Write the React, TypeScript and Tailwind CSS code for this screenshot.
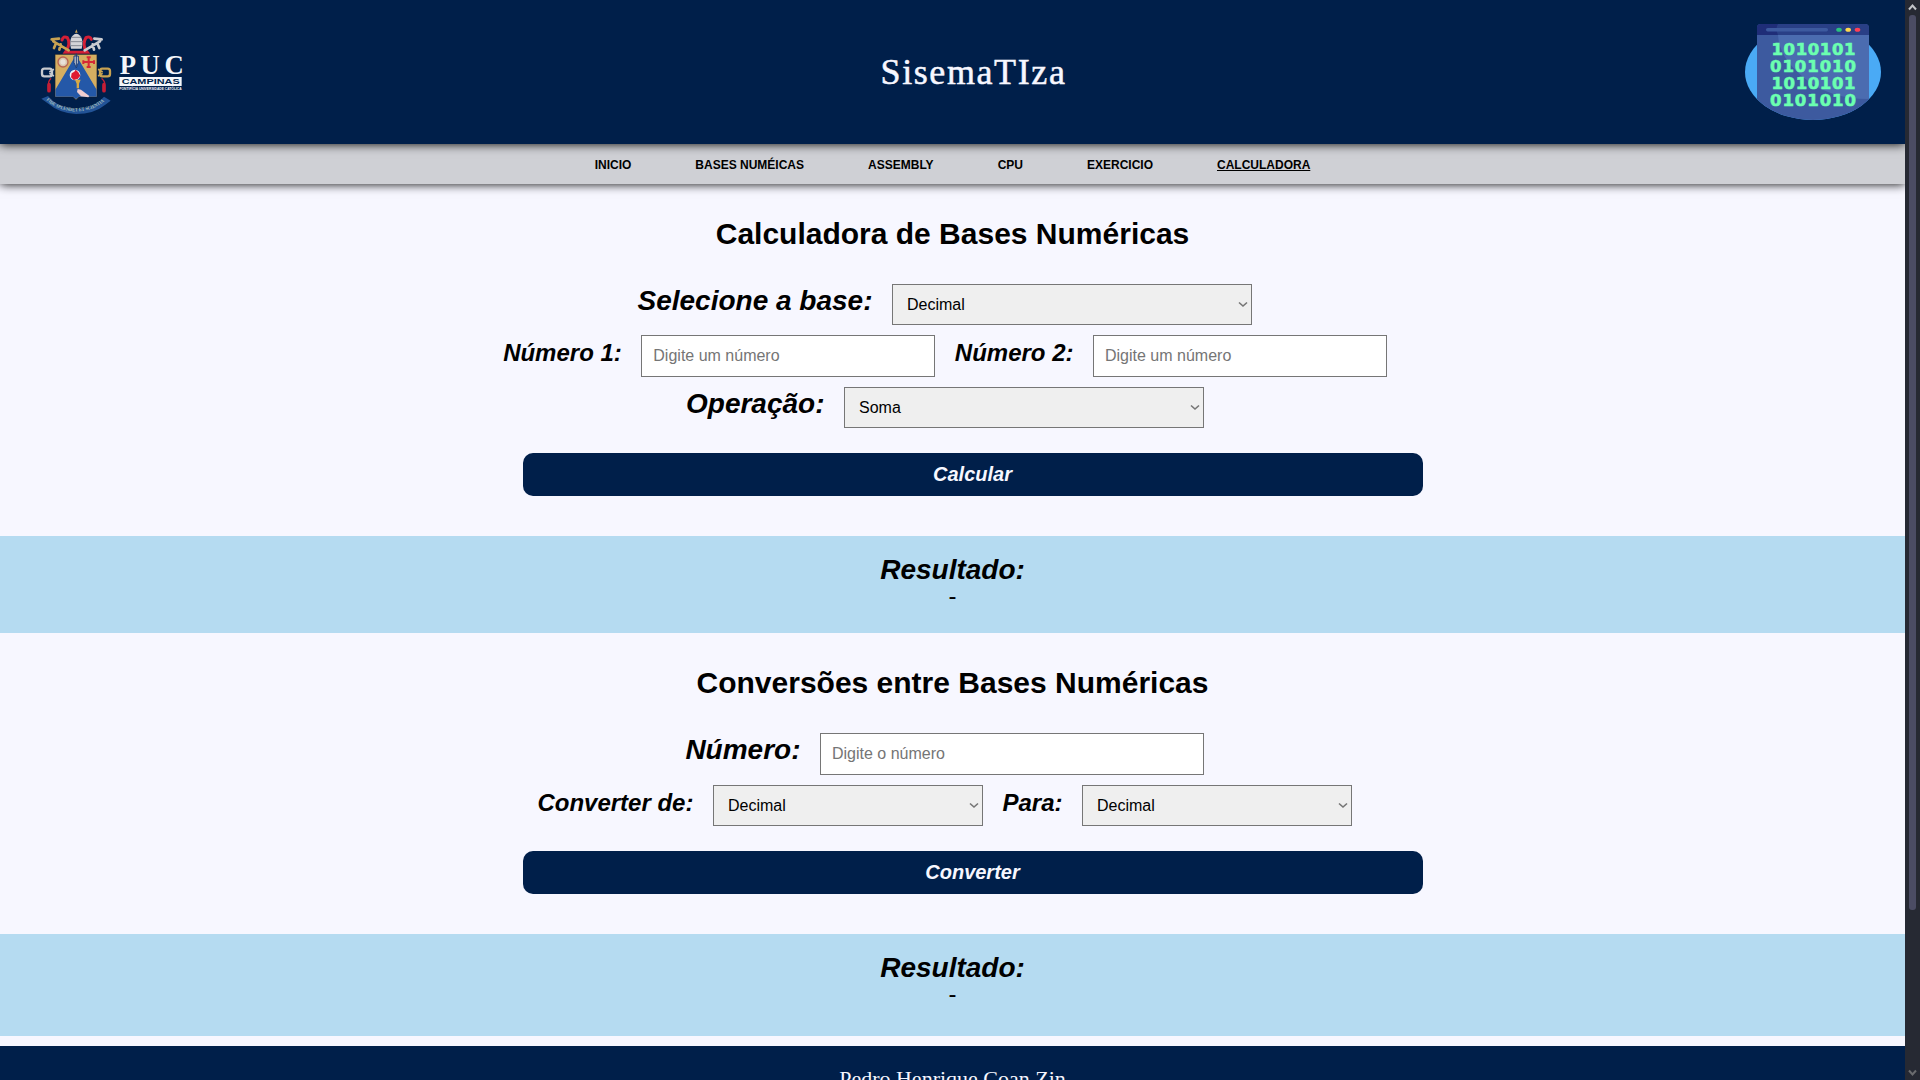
import React from "react";

const NAV = ["INICIO", "BASES NUMÉICAS", "ASSEMBLY", "CPU", "EXERCICIO", "CALCULADORA"];
const BASES = ["Decimal", "Binário", "Octal", "Hexadecimal"];
const OPERATIONS = ["Soma", "Subtração", "Multiplicação", "Divisão"];

function PucLogo() {
  return (
    <svg className="h-[125px] w-[190px]" viewBox="0 0 570 375" aria-label="PUC Campinas">
      <g fill="none" strokeLinecap="round">
        <path d="M126 90q4-14 16-7 10 16-2 38l-4 6h66l-6-8q-8-20 2-36 12-6 16 5" stroke="#d31f36" strokeWidth="9" />
        <path d="M100 94l46 27M108 100l-6 14M95 88l22-2M122 103l-4 16" stroke="#c8a252" strokeWidth="8" />
        <path d="M240 94l-46 27M232 100l6 14M245 88l-22-2M218 103l4 16" stroke="#c9cbd0" strokeWidth="8" />
        <path d="M92 206q-10 10-4 22M246 206q12 10 6 22" stroke="#c51e35" strokeWidth="4" />
        <path d="M87 224v18M252 224v18" stroke="#c51e35" strokeWidth="11" />
      </g>
      <path d="M153 116q-6-24 4-38 12-14 24 0 10 14 4 38z" fill="#d3d4d8" />
      <path d="M153 82h31M151 95h37M153 107h32" stroke="#858a93" strokeWidth="3" />
      <path d="M165 68l4-10 4 10z" fill="#c9a455" />
      <g fill="none" stroke="#c8cace" strokeWidth="7">
        <rect x="66" y="176" width="30" height="23" rx="7" />
        <path d="M88 186l14-8M88 190l14 8" strokeWidth="5" />
      </g>
      <g fill="none" stroke="#c8a252" strokeWidth="7">
        <rect x="240" y="176" width="30" height="23" rx="7" />
        <path d="M248 186l-14-8M248 190l-14 8" strokeWidth="5" />
      </g>
      <path d="M105 133h126v128h-54l-9 9-9-9h-54z" fill="#d5ae61" stroke="#141c2b" strokeWidth="2" />
      <path d="M168 135l62 104v21h-53l-9 8-9-8h-53v-21z" fill="#2458a8" />
      <circle cx="129" cy="156" r="15" fill="#d9c7b0" stroke="#b96553" strokeWidth="4" />
      <circle cx="129" cy="156" r="8" fill="#e9e1d8" />
      <path d="M206 142v29M190 156h32M200 142h12M200 171h12M190 151v11M222 151v11" stroke="#d62836" strokeWidth="6" />
      <path d="M162 138h13v20l-6 16-7-16zM169 130v40" fill="#c3c7cf" stroke="#1d3e77" strokeWidth="3" />
      <circle cx="165" cy="195" r="16" fill="#eef0f3" />
      <path d="M155 190l8-5 4-6 8 8 6 10-8 10-12 3-8-8z" fill="#df1a32" />
      <path d="M165 209h17l-5 12v14h-7v-14z" fill="#d8a944" />
      <path d="M173 237l10 2 25 19-3 4-22-3-12-13z" fill="#f1ced0" />
      <path d="M64 266l20-8q28 36 84 40 58-4 84-38l20 12-16 12q-34 28-88 28-50-2-86-33z" fill="#225397" />
      <path id="motto" d="M79 270q32 33 89 34 57-1 88-34" fill="none" />
      <text fontFamily="Liberation Serif" fontWeight="bold" fontSize="15" fill="#a9c1bf">
        <textPath href="#motto" textLength="190" lengthAdjust="spacingAndGlyphs">FIDE SPLENDET ET SCIENTIA</textPath>
      </text>
      <g fill="#f4f6fa">
        <text x="299" y="193" fontFamily="Liberation Serif" fontWeight="bold" fontSize="80" textLength="192" lengthAdjust="spacing">PUC</text>
        <rect x="298" y="201" width="187" height="27" />
        <text x="298" y="241" fontFamily="Liberation Sans" fontWeight="bold" fontSize="8" textLength="187" lengthAdjust="spacingAndGlyphs">PONTIFÍCIA UNIVERSIDADE CATÓLICA</text>
      </g>
      <text x="305" y="222" fill="#001f4a" fontFamily="Liberation Sans" fontWeight="bold" fontSize="21" textLength="174" lengthAdjust="spacingAndGlyphs">CAMPINAS</text>
    </svg>
  );
}

function BinaryLogo() {
  return (
    <svg className="h-[96px] w-[136px]" viewBox="0 0 136 96" aria-label="Código binário">
      <defs>
        <clipPath id="windowShape">
          <path d="M0 0H136V48A68 48 0 0 1 0 48Z" />
        </clipPath>
      </defs>
      <ellipse cx="68" cy="48" rx="68" ry="48" fill="#4aaaf5" />
      <g clipPath="url(#windowShape)">
        <path d="M12 4q0-4 4-4h104q4 0 4 4v92H12z" fill="#3d5a9f" />
        <path d="M33 11h91v64Q83 75 58 53 34 33 33 11z" fill="#4b6cb0" />
        <path d="M12 11V4q0-4 4-4h104q4 0 4 4v7z" fill="#293f86" />
        <path d="M12 11V4q0-4 4-4h17q-3 4 0 11z" fill="#1f2d78" />
      </g>
      <rect x="21" y="4" width="62" height="3.5" rx="1.7" fill="#3d5a9f" />
      <ellipse cx="94" cy="5.7" rx="2.8" ry="2" fill="#29c27f" />
      <ellipse cx="103.2" cy="5.7" rx="2.8" ry="2" fill="#ffd84d" />
      <ellipse cx="112.5" cy="5.7" rx="2.8" ry="2" fill="#ff4056" />
      <g fill="#6bffb0" stroke="#6bffb0" strokeWidth="0.6" fontFamily="DejaVu Sans" fontWeight="bold" fontSize="16.5">
        <text x="26.5" y="31.2" textLength="84">1010101</text>
        <text x="25" y="48" textLength="86">0101010</text>
        <text x="26.5" y="64.700" textLength="84">1010101</text>
        <text x="25" y="81.700" textLength="86">0101010</text>
      </g>
    </svg>
  );
}

function Label({ children, small }: { children: React.ReactNode; small?: boolean }) {
  return (
    <label
      className={
        small
          ? "mt-1 shrink-0 text-right text-[24px] leading-[27px] font-bold whitespace-nowrap italic"
          : "mt-px shrink-0 text-right text-[28px] leading-[32px] font-bold whitespace-nowrap italic"
      }
    >
      {children}
    </label>
  );
}

function Select({ options, className }: { options: string[]; className: string }) {
  return (
    <div className={`relative h-[41px] shrink-0 ${className}`}>
      <select className="block h-full w-full appearance-none border border-[#767676] bg-[#efefef] pl-[14px] text-[16px] leading-[19px] text-black">
        {options.map((o) => (
          <option key={o}>{o}</option>
        ))}
      </select>
      <svg
        className="pointer-events-none absolute top-[17px] right-1 h-[7px] w-[10px]"
        viewBox="0 0 10 7"
        fill="none"
        stroke="#757575"
        strokeWidth="1.6"
      >
        <path d="M1 1.500L5 5L9 1.500" />
      </svg>
    </div>
  );
}

function NumberInput({ placeholder, className }: { placeholder: string; className: string }) {
  return (
    <input
      placeholder={placeholder}
      className={`h-[42px] shrink-0 border border-[#767676] bg-white py-[10px] pr-[10px] pl-[11px] text-[16px] placeholder:text-[#757575] ${className}`}
    />
  );
}

function Row({ end, className, children }: { end: string; className: string; children: React.ReactNode }) {
  return <div className={`flex items-start justify-end gap-[19.5px] ${end} ${className}`}>{children}</div>;
}

function Title({ children }: { children: React.ReactNode }) {
  return <h1 className="mt-[33px] text-center text-[30px] leading-[34px] font-bold">{children}</h1>;
}

function ActionButton({ children }: { children: React.ReactNode }) {
  return (
    <button className="mt-[25px] ml-[523px] block h-[43px] w-[900px] rounded-[10px] bg-[#001f4a] pr-px pb-[2px] text-[20px] font-bold text-[#f7f7ff] italic">
      {children}
    </button>
  );
}

function Result({ className }: { className: string }) {
  return (
    <section className={`mt-10 bg-[#b5dbf1] pt-[18px] text-center ${className}`}>
      <h2 className="text-[28px] leading-[32px] font-bold italic">Resultado:</h2>
      <p className="-mt-[4px] text-[24px] leading-[27px]">-</p>
    </section>
  );
}

export default function App() {
  return (
    <div className="flex h-[1080px] w-[1920px] overflow-hidden bg-[#f7f7ff] font-['Liberation_Sans',Arial,sans-serif] text-black">
      <main className="h-[1080px] w-[1905px] shrink-0 overflow-hidden">
        <header className="relative z-20 flex h-36 items-start justify-between bg-[#001f4a] pt-[10px] pr-6 pl-5 shadow-[0_0_10px_#000]">
          <PucLogo />
          <h1 className="mt-[39px] ml-[46px] text-[36px] leading-[46px] tracking-[1.6px] whitespace-nowrap text-[#f7f7ff] [-webkit-text-stroke:0.5px_#f7f7ff] font-['Liberation_Serif',serif]">
            SisemaTIza
          </h1>
          <div className="mt-[14px] ml-[54px]">
            <BinaryLogo />
          </div>
        </header>
        <nav className="relative z-10 flex h-10 items-center justify-center gap-16 bg-[#cfd0d5] pt-[2px] text-[12px] font-bold shadow-[0_0_10px_#000]">
          {NAV.map((n) => (
            <a key={n} className={n === "CALCULADORA" ? "underline" : ""}>
              {n}
            </a>
          ))}
        </nav>

        <Title>Calculadora de Bases Numéricas</Title>
        <Row end="pr-[653px]" className="mt-[33px]">
          <Label>Selecione a base:</Label>
          <Select options={BASES} className="w-[360px]" />
        </Row>
        <Row end="pr-[518px]" className="mt-[10px]">
          <Label small>Número 1:</Label>
          <NumberInput placeholder="Digite um número" className="w-[294px]" />
          <Label small>Número 2:</Label>
          <NumberInput placeholder="Digite um número" className="w-[294px]" />
        </Row>
        <Row end="pr-[701px]" className="mt-[10px]">
          <Label>Operação:</Label>
          <Select options={OPERATIONS} className="w-[360px]" />
        </Row>
        <ActionButton>Calcular</ActionButton>
        <Result className="h-[97px]" />

        <Title>Conversões entre Bases Numéricas</Title>
        <Row end="pr-[701px]" className="mt-[33px]">
          <Label>Número:</Label>
          <NumberInput placeholder="Digite o número" className="w-[384px]" />
        </Row>
        <Row end="pr-[553px]" className="mt-[10px]">
          <Label small>Converter de:</Label>
          <Select options={BASES} className="w-[270px]" />
          <Label small>Para:</Label>
          <Select options={BASES} className="w-[270px]" />
        </Row>
        <ActionButton>Converter</ActionButton>
        <Result className="h-[102px]" />

        <footer className="mt-[10px] h-[120px] bg-[#001f4a] pt-[19px] text-center text-[22px] leading-[28px] text-[#f7f7ff] font-['Liberation_Serif',serif]">
          Pedro Henrique Coan Zin
        </footer>
      </main>

      <aside className="flex w-[15px] shrink-0 flex-col items-center bg-[#262933]">
        <svg className="h-[15px] w-[15px]" viewBox="0 0 15 15" fill="none" stroke="#c3c4c8" strokeWidth="2">
          <path d="M4 9.500L7.500 5.500L11 9.500" />
        </svg>
        <div className="h-[895px] w-[7px] rounded-[3px] bg-[#4b4c64]" />
        <svg className="mt-auto h-[15px] w-[15px]" viewBox="0 0 15 15" fill="none" stroke="#6a6b6e" strokeWidth="2">
          <path d="M4 5.500L7.500 9.500L11 5.500" />
        </svg>
      </aside>
    </div>
  );
}
